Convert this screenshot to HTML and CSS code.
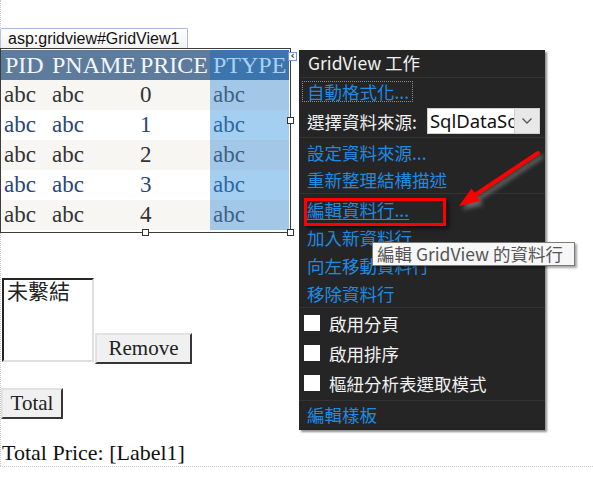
FILE: index.html
```html
<!DOCTYPE html>
<html lang="zh-Hant">
<head>
<meta charset="utf-8">
<title>GridView Designer</title>
<link rel="stylesheet" href="styles.css">
</head>
<body>
<div class="surface">
  <div class="tab">asp:gridview#GridView1</div>
  <div class="grid-frame">
    <table class="grid">
      <thead>
        <tr><th class="c1">PID</th><th class="c2">PNAME</th><th class="c3">PRICE</th><th class="c4 sel">PTYPE</th></tr>
      </thead>
      <tbody>
        <tr class="odd"><td>abc</td><td>abc</td><td>0</td><td class="sel">abc</td></tr>
        <tr class="even"><td>abc</td><td>abc</td><td>1</td><td class="sel">abc</td></tr>
        <tr class="odd"><td>abc</td><td>abc</td><td>2</td><td class="sel">abc</td></tr>
        <tr class="even"><td>abc</td><td>abc</td><td>3</td><td class="sel">abc</td></tr>
        <tr class="odd"><td>abc</td><td>abc</td><td>4</td><td class="sel">abc</td></tr>
      </tbody>
    </table>
    <span class="handle h-mid-right"></span>
    <span class="handle h-bottom-mid"></span>
    <span class="handle h-bottom-right"></span>
    <span class="smart-tag">&lsaquo;</span>
  </div>

  <div class="list-row">
    <div class="listbox">未繫結</div>
    <button class="btn btn-remove">Remove</button>
  </div>
  <button class="btn btn-total">Total</button>
  <div class="total-label">Total Price: [Label1]</div>

  <span class="guide"></span>

  <div class="panel">
    <div class="sec sec-title">GridView 工作</div>
    <div class="sec">
      <div class="row row-link"><span class="focus-box">自動格式化...</span></div>
      <div class="row row-select">
        <span class="label">選擇資料來源:</span>
        <span class="select"><span class="select-text">SqlDataSource1</span><span class="select-btn"><svg width="12" height="8" viewBox="0 0 12 8"><path d="M1.5 1.5 L6 6 L10.5 1.5" fill="none" stroke="#555" stroke-width="1.3"/></svg></span></span>
      </div>
    </div>
    <div class="sec sec-b">
      <div class="row row-link">設定資料來源...</div>
      <div class="row row-link">重新整理結構描述</div>
    </div>
    <div class="sec sec-b">
      <div class="row row-link row-28"><span class="underline">編輯資料行...</span></div>
      <div class="row row-link row-28">加入新資料行</div>
      <div class="row row-link row-28">向左移動資料行</div>
      <div class="row row-link row-28">移除資料行</div>
    </div>
    <div class="sec sec-checks">
      <div class="row row-check"><span class="box"></span>啟用分頁</div>
      <div class="row row-check"><span class="box"></span>啟用排序</div>
      <div class="row row-check"><span class="box"></span>樞紐分析表選取模式</div>
    </div>
    <div class="sec sec-last">
      <div class="row row-link">編輯樣板</div>
    </div>
  </div>

  <div class="callout"></div>
  <svg class="arrow" width="100" height="80" viewBox="450 140 100 80">
    <line x1="538" y1="153" x2="472" y2="197" stroke="#ff0000" stroke-width="4" stroke-linecap="round"/>
    <polygon points="459,206 471.5,188.5 480,201" fill="#ff0000"/>
  </svg>
  <div class="tooltip">編輯 GridView 的資料行</div>
</div>
</body>
</html>
```

FILE: styles.css
```css
html, body {
  margin: 0;
  padding: 0;
  background: #ffffff;
}

.surface {
  position: relative;
  width: 593px;
  height: 492px;
  padding-top: 28px;
  box-sizing: border-box;
  font-family: "Liberation Serif", serif;
  overflow: hidden;
}

.surface::before {
  content: "";
  position: absolute;
  left: 0;
  top: 0;
  height: 466px;
  border-left: 1px dotted #c8c8c8;
}

.tab {
  display: inline-block;
  box-sizing: border-box;
  height: 20px;
  padding: 0 8px 0 7px;
  border: 1px solid #a7bcd6;
  border-bottom: none;
  border-radius: 2px 2px 0 0;
  background: linear-gradient(#ffffff, #f2f2f2);
  font-family: "Liberation Sans", Arial, sans-serif;
  font-size: 16px;
  line-height: 19px;
  color: #111;
  vertical-align: top;
}

.grid-frame {
  position: relative;
  box-sizing: border-box;
  width: 291px;
  height: 185px;
  border: 1px solid #3c3c3c;
  padding: 1px 0 0 0;
}

.grid {
  border-collapse: collapse;
  font-family: "Liberation Serif", serif;
  font-size: 23px;
  table-layout: fixed;
  width: 287px;
}

.grid th, .grid td {
  height: 30px;
  padding: 0 0 0 3px;
  text-align: left;
  font-weight: normal;
  white-space: nowrap;
  overflow: hidden;
  line-height: 30px;
}

.grid th {
  font-size: 24px;
}

.grid .c1 { width: 44px; padding-left: 4px; }
.grid .c2 { width: 85px; }
.grid .c3 { width: 70px; }
.grid .c4 { width: 76px; }

.grid thead th {
  background: #5d7b9d;
  color: #f4f6fa;
}

.grid thead th.sel {
  background: #3c75ad;
  color: #a9cff2;
}

.grid tr.odd td {
  background: #f7f6f3;
  color: #333333;
}

.grid tr.even td {
  background: #ffffff;
  color: #284775;
}

.grid tr.odd td.sel {
  background: #a3c8e7;
  color: #3d6289;
}

.grid tr.even td.sel {
  background: #a5cff1;
  color: #2f66a3;
}

.handle {
  position: absolute;
  width: 5px;
  height: 5px;
  background: #fff;
  border: 1px solid #333;
}

.h-mid-right { left: 286px; top: 68px; }
.h-bottom-mid { left: 141px; top: 180px; }
.h-bottom-right { left: 286px; top: 180px; }

.smart-tag {
  position: absolute;
  left: 287px;
  top: 3px;
  width: 9px;
  height: 9px;
  box-sizing: border-box;
  border: 1px solid #6c9bd6;
  background: #fff;
  font-family: "DejaVu Sans", sans-serif;
  font-size: 10px;
  line-height: 6px;
  text-align: center;
  color: #333;
  font-weight: bold;
}

.guide {
  position: absolute;
  left: 288px;
  top: 36px;
  width: 0;
  height: 214px;
  border-left: 1px solid rgba(235, 150, 160, 0.6);
  z-index: -1;
}

.list-row {
  display: flex;
  align-items: flex-end;
  margin-top: 45px;
  padding-left: 2px;
}

.listbox {
  box-sizing: border-box;
  width: 92px;
  height: 84px;
  border: 2px inset #e0e0e0;
  border-top-color: #7a7a7a;
  border-left-color: #7a7a7a;
  font-family: "Liberation Serif", "Noto Sans CJK TC", serif;
  font-size: 21px;
  line-height: 24px;
  padding: 0 3px;
  color: #222;
}

.btn {
  box-sizing: border-box;
  font-family: "Liberation Serif", serif;
  font-size: 21px;
  color: #222;
  background: #f0f0f0;
  border: 2px outset #e2e2e2;
  border-right-color: #8a8a8a;
  border-bottom-color: #8a8a8a;
  padding: 0;
  margin: 0;
}

.btn-remove {
  width: 97px;
  height: 31px;
  margin-left: 1px;
  margin-bottom: -2px;
}

.btn-total {
  display: block;
  width: 62px;
  height: 31px;
  margin: 26px 0 0 1px;
}

.total-label {
  margin-top: 21px;
  padding-left: 2px;
  font-size: 22px;
  line-height: 25px;
  height: 26px;
  color: #111;
  border-bottom: 1px dotted #cfcfcf;
}

/* Smart tag panel */
.panel {
  position: absolute;
  left: 299px;
  top: 50px;
  width: 246px;
  height: 380px;
  box-sizing: border-box;
  background: #252526;
  box-shadow: 2px 2px 2px rgba(0, 0, 0, 0.45);
  font-family: "Noto Sans CJK TC", "Noto Sans", sans-serif;
  font-size: 17.5px;
  color: #f1f1f1;
  display: flex;
  flex-direction: column;
}

.sec {
  border-bottom: 1px solid #333336;
  display: flex;
  flex-direction: column;
}

.sec-title {
  height: 28px;
  box-sizing: border-box;
  padding-left: 9px;
  line-height: 26px;
  color: #f1f1f1;
}

.sec-b {
  padding-top: 1px;
}

.sec-checks {
  padding-bottom: 2px;
}

.sec-last {
  border-bottom: none;
}

.row {
  display: flex;
  align-items: center;
  padding-left: 8px;
  white-space: nowrap;
}

.row-link {
  height: 27px;
  color: #1f8ae0;
}

.row-28 {
  height: 28px;
}

.focus-box {
  border: 1px dotted #8a8a8a;
  padding: 0 3px 0 4px;
  margin-left: -5px;
  line-height: 19px;
}

.underline {
  text-decoration: underline;
  text-underline-offset: 2px;
}

.row-select {
  height: 32px;
  color: #f1f1f1;
}

.label {
  margin-right: 10px;
}

.select {
  display: flex;
  width: 113px;
  height: 26px;
  box-sizing: border-box;
  background: #fff;
  border: 1px solid #cfcfcf;
  overflow: hidden;
}

.select-text {
  flex: 1;
  overflow: hidden;
  color: #111;
  font-family: "Noto Sans", sans-serif;
  font-size: 18.5px;
  line-height: 24px;
  padding-left: 2px;
}

.select-btn {
  width: 24px;
  flex: none;
  background: #e8e8e8;
  border-left: 1px solid #cfcfcf;
  display: flex;
  align-items: center;
  justify-content: center;
}

.row-check {
  height: 30px;
  padding-left: 5px;
  color: #f1f1f1;
}

.box {
  width: 16px;
  height: 16px;
  background: #ffffff;
  margin-right: 9px;
  flex: none;
}

.callout {
  position: absolute;
  left: 304px;
  top: 198px;
  width: 142px;
  height: 28px;
  box-sizing: border-box;
  border: 3px solid #ff0000;
  box-shadow: 3px 3px 4px rgba(0, 0, 0, 0.55);
}

.arrow {
  position: absolute;
  left: 450px;
  top: 140px;
  overflow: visible;
  filter: drop-shadow(3px 4px 2px rgba(120, 120, 120, 0.8));
}

.tooltip {
  position: absolute;
  left: 372px;
  top: 242px;
  width: 203px;
  height: 24px;
  box-sizing: border-box;
  background: #f7f7f7;
  border: 1px solid #7a7a7a;
  box-shadow: 2px 2px 2px rgba(0, 0, 0, 0.35);
  font-family: "Noto Sans CJK TC", "Noto Sans", sans-serif;
  font-size: 17.5px;
  line-height: 22px;
  color: #555;
  padding-left: 4px;
  white-space: nowrap;
}
```
